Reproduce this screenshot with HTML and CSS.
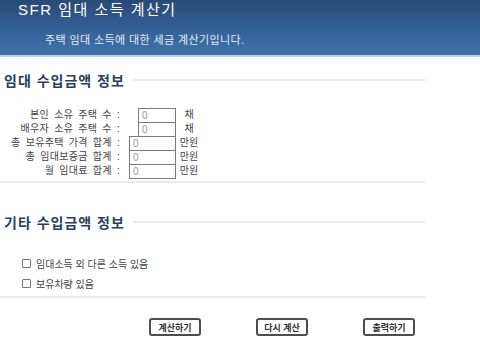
FILE: index.html
```html
<!DOCTYPE html>
<html lang="ko">
<head>
<meta charset="utf-8">
<title>SFR 임대 소득 계산기</title>
<link rel="stylesheet" href="styles.css">
</head>
<body>
<header class="top">
  <h1 class="top-title">SFR 임대 소득 계산기</h1>
  <p class="top-sub">주택 임대 소득에 대한 세금 계산기입니다.</p>
</header>

<section class="sec sec-first">
  <h2 class="sec-title"><span>임대 수입금액 정보</span></h2>
  <div class="form">
    <label class="lbl">본인 소유 주택 수 :</label>
    <div class="cell"><input class="inp inp-s" type="text" value="0"></div>
    <span class="unit">채</span>

    <label class="lbl">배우자 소유 주택 수 :</label>
    <div class="cell"><input class="inp inp-s" type="text" value="0"></div>
    <span class="unit">채</span>

    <label class="lbl">총 보유주택 가격 합계 :</label>
    <div class="cell"><input class="inp" type="text" value="0"></div>
    <span class="unit">만원</span>

    <label class="lbl">총 임대보증금 합계 :</label>
    <div class="cell"><input class="inp" type="text" value="0"></div>
    <span class="unit">만원</span>

    <label class="lbl">월 임대료 합계 :</label>
    <div class="cell"><input class="inp" type="text" value="0"></div>
    <span class="unit">만원</span>
  </div>
  <div class="rule"></div>
</section>

<section class="sec sec-second">
  <h2 class="sec-title"><span>기타 수입금액 정보</span></h2>
  <div class="checks">
    <label class="chk-row"><input class="chk" type="checkbox"> 임대소득 외 다른 소득 있음</label>
    <label class="chk-row"><input class="chk" type="checkbox"> 보유차량 있음</label>
  </div>
  <div class="rule"></div>
</section>

<div class="actions">
  <button class="btn" type="button">계산하기</button>
  <button class="btn" type="button">다시 계산</button>
  <button class="btn" type="button">출력하기</button>
</div>
</body>
</html>
```

FILE: styles.css
```css
html, body {
  margin: 0;
  padding: 0;
  background: #ffffff;
}
body {
  width: 480px;
  height: 344px;
  overflow: hidden;
  font-family: "Liberation Sans", "Noto Sans CJK KR", sans-serif;
  color: #333;
}

.top {
  height: 55px;
  background: linear-gradient(to bottom, #284a76 0%, #345f95 50%, #4073ad 100%);
  border-bottom: 2px solid #b9d1ec;
}
.top-title {
  margin: 0;
  padding-left: 18px;
  font-size: 15px;
  line-height: 20px;
  font-weight: normal;
  color: #ffffff;
  letter-spacing: 1.5px;
}
.top-sub {
  margin: 13px 0 0 0;
  padding-left: 45px;
  font-size: 11px;
  line-height: 14px;
  color: #e3ebf5;
  letter-spacing: 0.4px;
}

.sec {
  width: 425px;
}
.sec-first {
  margin-top: 15px;
}
.sec-second {
  margin-top: 31px;
}
.sec-title {
  display: flex;
  align-items: center;
  margin: 0;
  padding-left: 4px;
  font-size: 14px;
  line-height: 18px;
  font-weight: bold;
  color: #2d3f58;
  letter-spacing: 1px;
}
.sec-title::after {
  content: "";
  flex: 1;
  height: 2px;
  margin-left: 8px;
  margin-top: -2px;
  background: #ececec;
}

.form {
  display: grid;
  grid-template-columns: 122px 54px 25px;
  grid-auto-rows: 14px;
  margin-top: 18px;
  font-size: 10px;
}
.lbl {
  text-align: right;
  padding-right: 2px;
  line-height: 14px;
  color: #444;
  white-space: nowrap;
  word-spacing: 2px;
  letter-spacing: 0.3px;
}
.cell {
  display: flex;
  justify-content: flex-end;
}
.inp {
  box-sizing: border-box;
  width: 47px;
  height: 15px;
  margin: 0;
  padding: 0 0 0 3px;
  border: 1px solid #7a7a7a;
  font-family: "Liberation Sans", sans-serif;
  font-size: 10px;
  color: #999;
  background: #fff;
}
.inp-s {
  width: 38px;
}
.unit {
  text-align: center;
  line-height: 14px;
  color: #444;
  padding-left: 1px;
}

.rule {
  height: 2px;
  background: #ececec;
  margin-top: 3px;
}

.checks {
  margin-top: 21px;
  padding-left: 22px;
}
.chk-row {
  display: flex;
  align-items: center;
  height: 20px;
  font-size: 10px;
  color: #444;
  gap: 5px;
}
.chk {
  appearance: none;
  -webkit-appearance: none;
  box-sizing: border-box;
  width: 9px;
  height: 9px;
  margin: 0;
  border: 1px solid #777;
  border-radius: 1px;
  background: #fff;
}

.actions {
  display: flex;
  gap: 55px;
  padding-left: 149px;
  margin-top: 20px;
}
.btn {
  box-sizing: border-box;
  width: 52px;
  height: 18px;
  padding: 0;
  border: 2px solid #4d4d4d;
  border-radius: 3px;
  background: #fff;
  font-family: "Liberation Sans", "Noto Sans CJK KR", sans-serif;
  font-size: 9px;
  font-weight: bold;
  color: #333;
}
```
